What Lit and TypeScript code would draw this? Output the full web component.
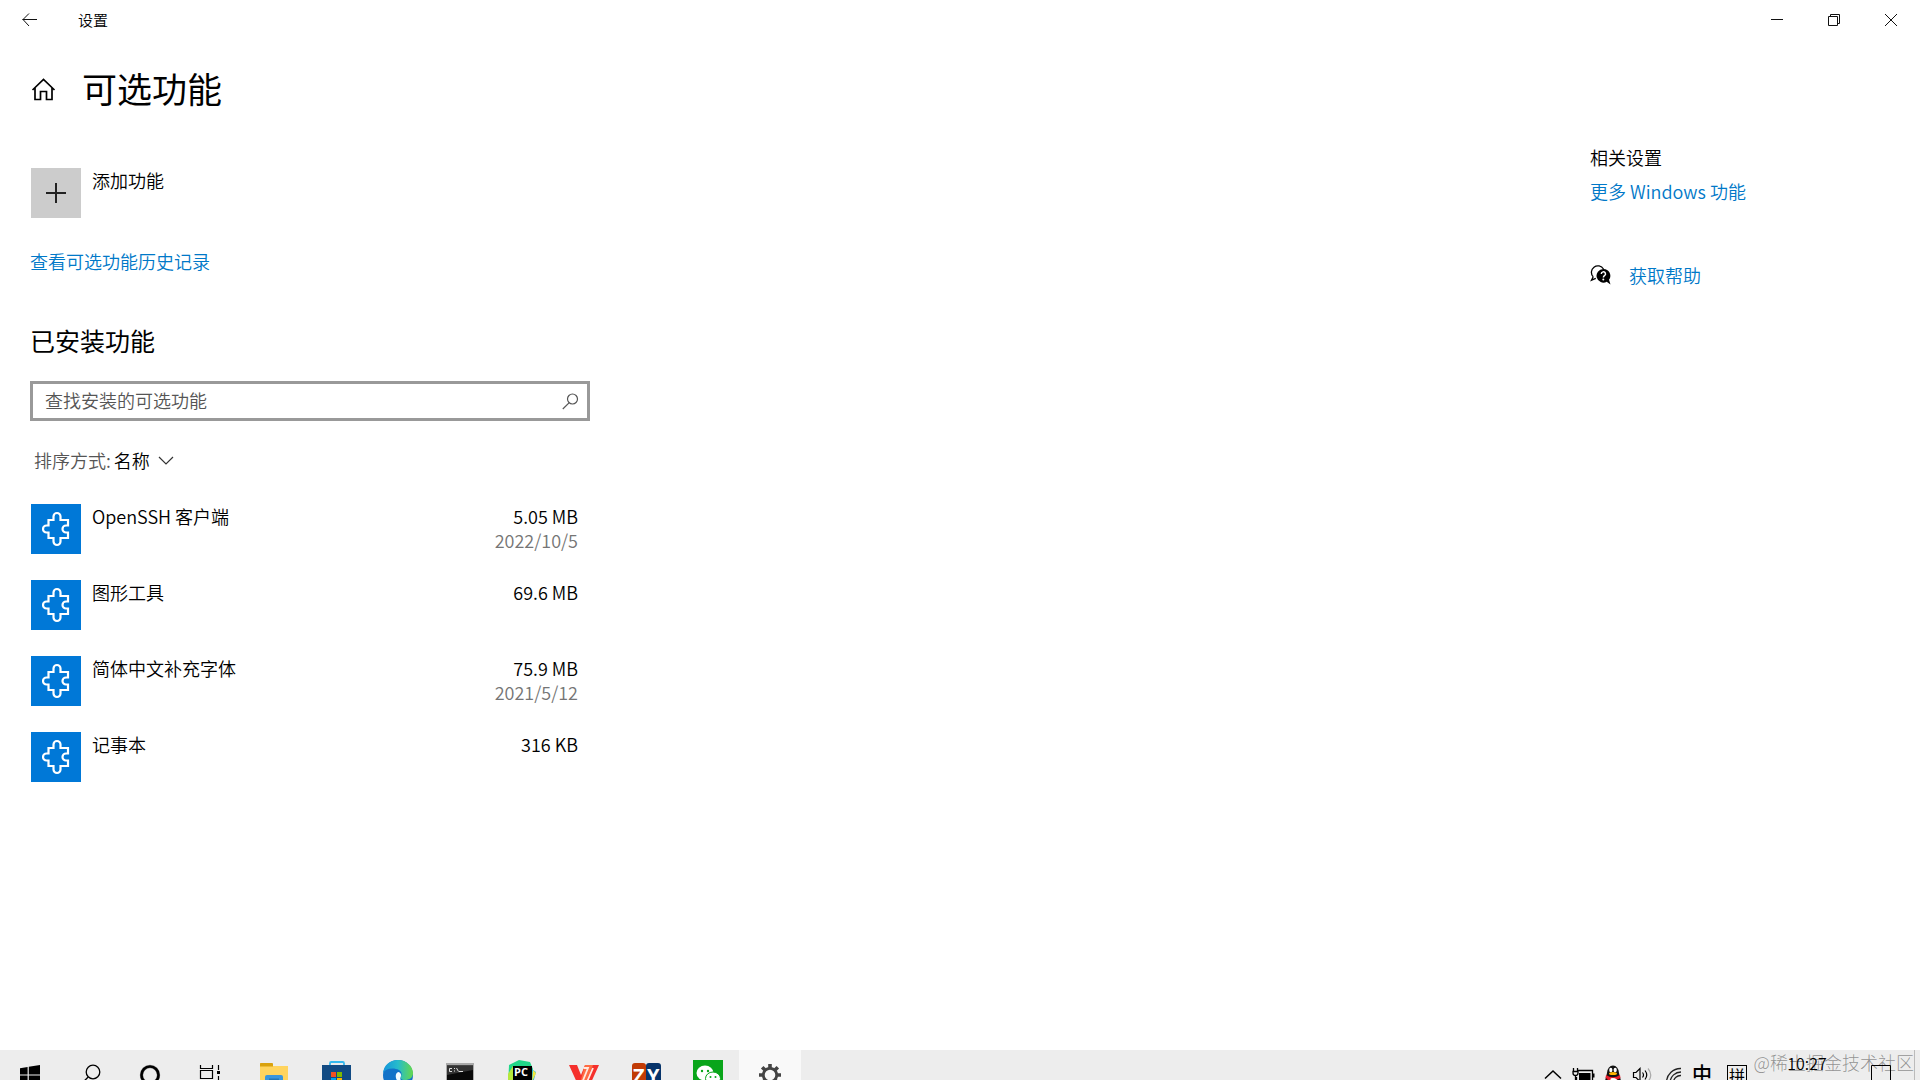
import { LitElement, html, css, svg } from "lit";
import { customElement } from "lit/decorators.js";

interface Feature {
  name: string;
  size: string;
  date?: string;
}

const features: Feature[] = [
  { name: "OpenSSH 客户端", size: "5.05 MB", date: "2022/10/5" },
  { name: "图形工具", size: "69.6 MB" },
  { name: "简体中文补充字体", size: "75.9 MB", date: "2021/5/12" },
  { name: "记事本", size: "316 KB" },
];

const family = css`"Noto Sans CJK SC", "Noto Sans", sans-serif`;

@customElement("settings-titlebar")
class SettingsTitlebar extends LitElement {
  static styles = css`
    :host { display: flex; height: 40px; align-items: stretch; padding-right: 1px; font: 350 15px/24px ${family}; color: #000; }
    button { border: 0; padding: 0; background: none; display: grid; place-items: center; }
    svg { display: block; fill: none; stroke: #111; }
    .back { width: 60px; }
    .name { flex: 1; align-self: center; padding-left: 18px; }
    .win { width: 57px; }
  `;
  render() {
    return html`
      <button class="back" aria-label="返回">
        <svg width="16" height="14" viewBox="0 0 16 14"><path d="M.5 6.5H15M7 .5 1 6.5 7 13" /></svg>
      </button>
      <span class="name">设置</span>
      <button class="win" aria-label="最小化">
        <svg width="12" height="12" viewBox="0 0 12 12"><path d="M0 5.5H12" /></svg>
      </button>
      <button class="win" aria-label="还原">
        <svg width="12" height="12" viewBox="0 0 12 12"><path d="M.5 2.5h9v9h-9zM2.5 2.5V.5h9v9h-2" /></svg>
      </button>
      <button class="win" aria-label="关闭">
        <svg width="12" height="12" viewBox="0 0 12 12"><path d="M0 0 12 12M12 0 0 12" /></svg>
      </button>
    `;
  }
}

@customElement("settings-page")
class SettingsPage extends LitElement {
  static styles = css`
    :host { display: grid; grid-template-columns: minmax(0, 1fr) 330px; align-content: start; font: 350 18px/24px ${family}; color: #000; }
    h1, h2, h3, ul, p { margin: 0; padding: 0; font-weight: inherit; list-style: none; }
    svg { display: block; }
    a { color: #0078c8; text-decoration: none; }
    button { border: 0; background: none; font: inherit; color: inherit; text-align: left; padding: 0; }
    .head { grid-column: 1 / -1; display: flex; align-items: center; gap: 26px; padding: 24px 31px 0; }
    .head svg { margin-top: 2px; }
    h1 { font-size: 35px; line-height: 48px; font-weight: 400; }
    .content { padding: 56px 30px 0; max-width: 560px; }
    .row { display: flex; width: 100%; gap: 11px; padding: 0 12px 0 1px; box-sizing: border-box; }
    .tile { width: 50px; height: 50px; display: grid; place-items: center; background: #ccc; flex: none; }
    .tile.blue { background: #0078d7; }
    .label { flex: 1; }
    .history { margin-top: 31px; }
    h2 { margin-top: 51px; font-size: 25px; line-height: 32px; font-weight: 400; }
    .search { margin-top: 25px; height: 40px; box-sizing: border-box; border: 3px solid #999; display: flex; align-items: center; padding: 0 8px 0 12px; }
    .search input { flex: 1; min-width: 0; border: 0; outline: 0; padding: 0 0 2px; font: inherit; background: none; color: #000; }
    .search input::placeholder { color: #555; opacity: 1; }
    .sort { display: flex; align-items: center; margin: 27px 0 32px; padding-left: 4px; }
    .sort label { color: #555; margin-right: 3px; }
    .sort select { appearance: none; border: 0; background: none; font: inherit; color: #000; padding: 0; margin-right: 8px; }
    .list { display: grid; gap: 26px; }
    .meta { text-align: right; }
    .meta small { display: block; font-size: inherit; color: #757575; }
    aside { padding-top: 33px; }
    h3 { font-size: inherit; }
    .related { margin-top: 10px; }
    .help { display: flex; align-items: center; gap: 18px; margin-top: 60px; }
  `;

  private puzzle() {
    return html`<svg width="28" height="36" viewBox="0 0 28 36" fill="none" stroke="#fff" stroke-width="2.2">
      <path d="M6.500 9H11.500V5.500a3.500 3.500 0 0 1 7 0V9H26V14.500H24a3.500 3.500 0 0 0 0 7H26V27H18.500V30.500a3.500 3.500 0 0 1-7 0V27H6.500V21.500H4.500a3.500 3.500 0 0 1 0-7H6.500Z" />
    </svg>`;
  }

  render() {
    return html`
      <header class="head">
        <svg width="25" height="24" viewBox="0 0 25 24" fill="none" stroke="#000" stroke-width="1.7">
          <path d="M1.5 13 12.5 2.500 23.500 13M4 11V22.500H9.500V14.500H15.500V22.500H21V11" />
        </svg>
        <h1>可选功能</h1>
      </header>
      <main class="content">
        <button class="row">
          <span class="tile">
            <svg width="20" height="20" viewBox="0 0 20 20" stroke="#222" stroke-width="2"><path d="M10 0V20M0 10H20" /></svg>
          </span>
          <span class="label">添加功能</span>
        </button>
        <p class="history"><a href="#history">查看可选功能历史记录</a></p>
        <h2>已安装功能</h2>
        <div class="search">
          <input type="text" aria-label="查找安装的可选功能" placeholder="查找安装的可选功能" />
          <svg width="17" height="17" viewBox="0 0 17 17" fill="none" stroke="#555" stroke-width="1.200">
            <circle cx="10.500" cy="6" r="5" /><path d="M7 9.800.8 16" />
          </svg>
        </div>
        <div class="sort">
          <label for="order">排序方式:</label>
          <select id="order"><option>名称</option></select>
          <svg width="16" height="9" viewBox="0 0 16 9" fill="none" stroke="#333" stroke-width="1.200"><path d="M1 1 8 8 15 1" /></svg>
        </div>
        <ul class="list">
          ${features.map(
            (f) => html`<li>
              <button class="row">
                <span class="tile blue">${this.puzzle()}</span>
                <span class="label">${f.name}</span>
                <span class="meta">${f.size}${f.date ? html`<small>${f.date}</small>` : ""}</span>
              </button>
            </li>`
          )}
        </ul>
      </main>
      <aside>
        <h3>相关设置</h3>
        <p class="related"><a href="#more">更多 Windows 功能</a></p>
        <p class="help">
          <svg width="21" height="20" viewBox="0 0 21 20">
            <path d="M3.200 11.800A6.500 6.500 0 1 1 13.500 4M3.200 11.800 1.500 15.200 5.800 13.300" fill="none" stroke="#000" stroke-width="1.300" />
            <path d="M13.300 4a6.800 6.800 0 1 0 3.400 12.700L20.500 19.500 19 14.800A6.800 6.800 0 0 0 13.300 4Z" />
            <path d="M11.300 9a2.100 2.100 0 1 1 3.200 1.700c-.9.600-1.100.9-1.100 1.700" fill="none" stroke="#fff" stroke-width="1.500" />
            <circle cx="13.300" cy="14.500" r="1" fill="#fff" />
          </svg>
          <a href="#help">获取帮助</a>
        </p>
      </aside>
    `;
  }
}

/* App glyphs share a 30x30 box centred in the 50px tall taskbar button. */
const glyph = {
  start: svg`<path d="M5 8.200 12.600 7V14.500H5ZM13.800 6.800 25 5V14.500H13.800ZM5 15.600H12.600V23.200L5 22ZM13.800 15.600H25V25L13.800 23.400Z"/>`,
  search: svg`<g fill="none" stroke="#000" stroke-width="1.300"><circle cx="18" cy="12" r="6.800"/><path d="M13.200 17 5.500 24.700"/></g>`,
  cortana: svg`<circle cx="15" cy="15" r="8.500" fill="none" stroke="#999" stroke-width="3.400"/><circle cx="15" cy="15" r="8.500" fill="none" stroke="#000" stroke-width="2.600"/>`,
  tasks: svg`<g fill="none" stroke="#000" stroke-width="1.200"><path d="M5.500 5V8.500H17.500V5M5.500 10.500h12v8h-12zM5.500 24V21.500H17.500V24M23.500 5V10M23.500 16V24"/></g><path d="M22 11h3v3h-3z"/>`,
  files: svg`<path d="M1 3H13L14 6H29V27H1Z" fill="#ffd45e"/><path d="M1 4a1 1 0 0 1 1-1H13a1 1 0 0 1 1 1V6.500H1Z" fill="#d9a20e"/><path d="M6 27V17a2 2 0 0 1 2-2H22a2 2 0 0 1 2 2V27Z" fill="#3a96dd"/><path d="M10 18.500H20V22H10Z" fill="#2476b5"/>`,
  store: svg`<path d="M9 5.500V3.200A1.200 1.200 0 0 1 10.200 2H21.800A1.200 1.200 0 0 1 23 3.200V5.500" fill="none" stroke="#35b9ef" stroke-width="1.800"/><path d="M1 5H30V25a3 3 0 0 1-3 3H4a3 3 0 0 1-3-3Z" fill="#124b83"/><path d="M10 12h5v5h-5z" fill="#f25022"/><path d="M16 12h5v5h-5z" fill="#7fba00"/><path d="M10 18h5v5h-5z" fill="#00a4ef"/><path d="M16 18h5v5h-5z" fill="#ffb900"/>`,
  edge: svg`<defs><linearGradient id="wave"><stop offset="0" stop-color="#1495dc"/><stop offset=".5" stop-color="#27bccb"/><stop offset="1" stop-color="#65d84b"/></linearGradient></defs><circle cx="15" cy="15" r="15" fill="#1272c8"/><path d="M0 13C1 5 7 0 15 0S30 6 30 13c0 5-4 7-8 7s-5-2-4-3.500 1-5-2-6.500C11 7.500 3 8 0 13Z" fill="url(#wave)"/><path d="M15.500 12c-3.500 1-3.500 6-1 9h4c-2-2-1-3.500-.5-5S17.500 12.500 15.500 12Z" fill="#f4fbff"/>`,
  cmd: svg`<path d="M1 3H29V27H1Z" fill="#aaa"/><path d="M2 5.500H28V27H2Z" fill="#090909"/><path d="M2 15 28 10V5.500H2Z" fill="#333"/><g fill="none" stroke="#ddd"><path d="M7 8.500H4.500V11.500H7M9.500 8v1M9.500 10.500v1M11.500 8l2 3.500M14 11.500h4"/></g>`,
  pycharm: svg`<path d="M2 5 12 0 23 2 26 9 24 27H1Z" fill="#21d789"/><path d="M20 6 29 12 25 27H18Z" fill="#17b5e6"/><path d="M1 14 6 6 8 26H1Z" fill="#b5e83b"/><path d="M26 10 29 13 25 22Z" fill="#f5e93d"/><path d="M6 6H25V26H6Z"/><text x="7" y="16" font-family="Open Sans, sans-serif" font-size="11" font-weight="700" fill="#fff">PC</text>`,
  wps: svg`<path d="M0 5H8L12 15 16 5H30L20 27H10Z" fill="#f5302c"/><path d="M16 5H24L15 27H10Z" fill="#ff6c42"/><path d="M14.500 8H19L13 23M24 8 17.500 23" stroke="#ffe9e0" stroke-width="1.800" fill="none"/>`,
  zy: svg`<path d="M1 6a3 3 0 0 1 3-3H12a3 3 0 0 1 3 3V27H1Z" fill="#c13b06"/><path d="M15 6a3 3 0 0 1 3-3H27a3 3 0 0 1 3 3V27H15Z" fill="#07346a"/><text x="2" y="23" font-family="Open Sans, sans-serif" font-size="20" font-weight="700" fill="#fff">Z</text><text x="16" y="23" font-family="Open Sans, sans-serif" font-size="20" font-weight="700" fill="#fff">Y</text>`,
  wechat: svg`<path d="M0 0H30V30H0Z" fill="#09a51a"/><ellipse cx="12" cy="13" rx="8.500" ry="7.500" fill="#fff"/><ellipse cx="20" cy="18.500" rx="7.500" ry="6.500" fill="#fff" stroke="#09a51a"/><g fill="#09a51a"><circle cx="9" cy="11" r="1.200"/><circle cx="15" cy="11" r="1.200"/><circle cx="17.500" cy="17" r="1"/><circle cx="22.500" cy="17" r="1"/></g>`,
  gear: svg`<g fill="none" stroke="#444"><circle cx="15" cy="15" r="6.700" stroke-width="2.800"/><g stroke-width="3.600"><path d="M15 4V8M15 22V26M4 15H8M22 15H26M7.200 7.200 10 10M20 20 22.800 22.800M22.800 7.200 20 10M10 20 7.200 22.800"/></g></g>`,
};

const systemApps = [
  { id: "开始", art: glyph.start },
  { id: "搜索", art: glyph.search },
  { id: "Cortana", art: glyph.cortana },
  { id: "任务视图", art: glyph.tasks },
];
const apps = [
  { id: "文件资源管理器", art: glyph.files },
  { id: "Microsoft Store", art: glyph.store },
  { id: "Microsoft Edge", art: glyph.edge },
  { id: "命令提示符", art: glyph.cmd },
  { id: "PyCharm", art: glyph.pycharm },
  { id: "WPS", art: glyph.wps },
  { id: "ZY", art: glyph.zy },
  { id: "微信", art: glyph.wechat },
  { id: "设置", art: glyph.gear, active: true },
];

const tray = [
  { id: "显示隐藏的图标", art: svg`<path d="M7 18.500 15 11 23 18.500" fill="none" stroke="#000" stroke-width="1.500"/>` },
  { id: "电源", art: svg`<path d="M10 10.500H24.500V21H8.500V17" fill="none" stroke="#000" stroke-width="1.300"/><path d="M11 13H22.500V20H11ZM25 13.500h1.500v4H25z"/><path d="M5.500 8v3M9.500 8v3M5 11.500H10V13a2.500 2.500 0 0 1-5 0ZM7.500 15V20" fill="none" stroke="#000" stroke-width="1.300"/>` },
  { id: "QQ", art: svg`<path d="M9 13a6 7.500 0 0 1 12 0L23 21 20 25H10L7 21Z" fill="#111"/><ellipse cx="12.800" cy="10" rx="1.600" ry="2.200" fill="#fff"/><ellipse cx="17.200" cy="10" rx="1.600" ry="2.200" fill="#fff"/><ellipse cx="15" cy="13.500" rx="4" ry="1.600" fill="#ffb400"/><path d="M8 15Q15 19.500 22 15L22.500 18Q15 22.500 7.500 18Z" fill="#e81c2a"/><ellipse cx="15" cy="22" rx="5" ry="4" fill="#fff"/><path d="M9.500 17h3v5h-3z" fill="#e81c2a"/>` },
  { id: "音量", art: svg`<g fill="none" stroke="#000" stroke-width="1.200"><path d="M5.500 12.500H8L12 8.500V21.500L8 17.500H5.500ZM14.500 12.500Q16.500 15 14.500 17.500M17 10.500Q20.500 15 17 19.500"/><path d="M20 8.500Q25.500 15 20 21.500" stroke="#aaa"/></g>` },
  { id: "网络", art: svg`<g fill="none" stroke="#222" stroke-width="1.300"><path d="M8.500 22A14 14 0 0 1 23 8.500M12 22A11 11 0 0 1 23 12M15.500 22A7 7 0 0 1 23 15.500"/></g>` },
];

@customElement("desktop-taskbar")
class DesktopTaskbar extends LitElement {
  static styles = css`
    :host { display: flex; position: relative; height: 30px; overflow: hidden; background: #ededed; color: #000; font: 15px/20px ${family}; }
    button { border: 0; padding: 10px 0; margin: 0; background: none; height: 50px; width: 62px; display: flex; justify-content: center; font: inherit; color: inherit; box-sizing: border-box; }
    svg { display: block; width: 30px; height: 30px; flex: none; }
    .system { display: flex; margin-right: 3px; }
    .system button { width: 60px; }
    .apps { display: flex; flex: 1; }
    .active { background: #f9f9f9; }
    .tray { display: flex; margin-right: 5px; padding-right: 8px; border-right: 1px solid #bbb; }
    .tray button { width: 30px; }
    .tray .lang { width: 28px; padding-top: 9px; font-size: 20px; line-height: 30px; font-weight: 500; }
    .tray .ime { width: 42px; padding-top: 15px; }
    .box { width: 20px; height: 20px; box-sizing: border-box; border: 1px solid #000; font-size: 16px; line-height: 18px; text-align: center; }
    .tray .clock { width: 98px; padding-top: 3px; font-size: 16px; font-weight: 350; }
    .tray .notes { width: 50px; }
    .mark { position: absolute; right: 6px; top: 0; font-size: 18px; line-height: 24px; font-weight: 300; color: rgba(0, 0, 0, 0.4); pointer-events: none; }
  `;
  render() {
    return html`
      <nav class="system">${systemApps.map((a) => html`<button aria-label=${a.id}><svg viewBox="0 0 30 30">${a.art}</svg></button>`)}</nav>
      <nav class="apps">
        ${apps.map((a) => html`<button class=${a.active ? "active" : ""} aria-label=${a.id}><svg viewBox="0 0 30 30">${a.art}</svg></button>`)}
      </nav>
      <div class="tray">
        ${tray.map((t) => html`<button aria-label=${t.id}><svg viewBox="0 0 30 30">${t.art}</svg></button>`)}
        <button class="lang">中</button>
        <button class="ime"><span class="box">拼</span></button>
        <button class="clock"><time datetime="10:27">10:27</time></button>
        <button class="notes" aria-label="通知">
          <svg viewBox="0 0 30 30"><path d="M5.500 5.500H24.500V21.500H19V26L14.500 21.500H5.500Z" fill="none" stroke="#000" /></svg>
        </button>
      </div>
      <span class="mark">@稀土掘金技术社区</span>
    `;
  }
}

@customElement("app-root")
class AppRoot extends LitElement {
  static styles = css`
    :host { display: flex; flex-direction: column; min-height: 100vh; background: #fff; }
    settings-page { flex: 1; }
  `;
  render() {
    return html`
      <settings-titlebar></settings-titlebar>
      <settings-page></settings-page>
      <desktop-taskbar></desktop-taskbar>
    `;
  }
}
